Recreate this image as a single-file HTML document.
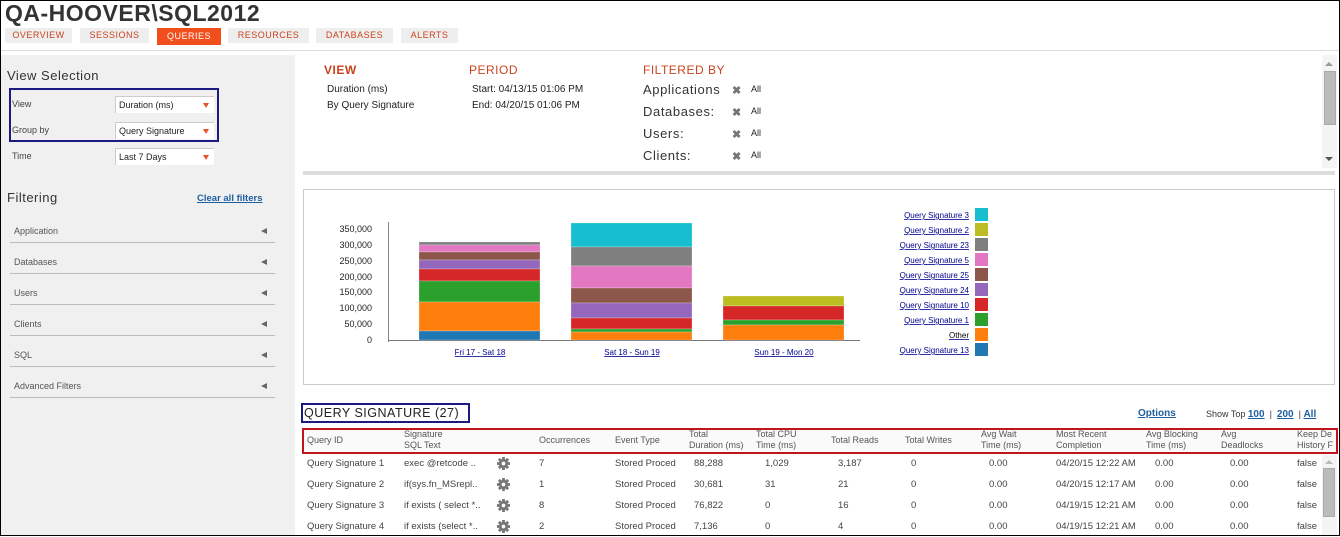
<!DOCTYPE html>
<html><head><meta charset="utf-8">
<style>
*{margin:0;padding:0;box-sizing:border-box}
body{width:1340px;height:536px;overflow:hidden;background:#fff;font-family:"Liberation Sans",sans-serif;position:relative;color:#333}
.a{position:absolute;white-space:nowrap}
.tab{position:absolute;top:28px;height:15px;background:#eee;color:#c9441e;font-size:9px;letter-spacing:.5px;text-align:center;line-height:15px}
.sb{font-size:9px;color:#444}
.sel{position:absolute;left:115px;width:99px;height:17px;background:#fff;border-top:1px solid #ccc;border-left:1px solid #ccc;font-size:9px;line-height:16px;padding-left:3px;color:#222}
.sel:after{content:"";position:absolute;right:5px;top:6px;border-left:3px solid transparent;border-right:3px solid transparent;border-top:5px solid #e8542a}
.flt{position:absolute;left:10px;width:265px;height:22px;border-bottom:1px solid #bbb;font-size:9px;color:#555;padding-left:4px;line-height:20px}
.flt:after{content:"";position:absolute;right:8px;top:7px;border-top:3.5px solid transparent;border-bottom:3.5px solid transparent;border-right:6px solid #666}
.or{color:#c9441e;font-size:12px;letter-spacing:.5px}
.t9{font-size:10px;color:#222}
.fl{font-size:13px;color:#333;letter-spacing:.6px}
.x{font-size:11px;color:#777;font-weight:bold}
.th{font-size:9px;color:#555;line-height:11px}
.td{font-size:9.5px;color:#444}
.gear{position:absolute;left:497px;width:13px;height:13px}
</style></head><body>
<div style="position:absolute;inset:0;border:1px solid #000;z-index:9;pointer-events:none"></div>
<div class="a" style="left:5px;top:0px;font-size:23px;font-weight:bold;color:#333;letter-spacing:.5px">QA-HOOVER\SQL2012</div>
<div class="tab" style="left:5px;width:67px">OVERVIEW</div>
<div class="tab" style="left:80px;width:69px">SESSIONS</div>
<div class="tab" style="left:157px;width:64px;background:#f04e1c;color:#fff;height:17px;top:28px;line-height:17px">QUERIES</div>
<div class="tab" style="left:228px;width:81px">RESOURCES</div>
<div class="tab" style="left:316px;width:77px">DATABASES</div>
<div class="tab" style="left:401px;width:57px">ALERTS</div>
<div class="a" style="left:0;top:50px;width:1340px;height:1px;background:#ddd"></div>

<div class="a" style="left:1px;top:55px;width:294px;height:481px;background:#f0f0f0"></div>
<div class="a" style="left:7px;top:68px;font-size:13px;color:#333;letter-spacing:.5px">View Selection</div>
<div class="a" style="left:9px;top:88px;width:210px;height:54px;border:2px solid #1a1a80"></div>
<div class="a sb" style="left:12px;top:99px">View</div>
<div class="sel" style="top:96px">Duration (ms)</div>
<div class="a sb" style="left:12px;top:125px">Group by</div>
<div class="sel" style="top:122px">Query Signature</div>
<div class="a sb" style="left:12px;top:151px">Time</div>
<div class="sel" style="top:148px">Last 7 Days</div>
<div class="a" style="left:7px;top:190px;font-size:13px;color:#333;letter-spacing:.5px">Filtering</div>
<div class="a" style="left:197px;top:193px;font-size:9.5px;color:#1f5fa0;font-weight:bold;text-decoration:underline">Clear all filters</div>
<div class="flt" style="top:221px">Application</div>
<div class="flt" style="top:252px">Databases</div>
<div class="flt" style="top:283px">Users</div>
<div class="flt" style="top:314px">Clients</div>
<div class="flt" style="top:345px">SQL</div>
<div class="flt" style="top:376px">Advanced Filters</div>

<div class="a or" style="left:324px;top:63px;font-weight:bold">VIEW</div>
<div class="a t9" style="left:327px;top:84px">Duration (ms)</div>
<div class="a t9" style="left:327px;top:100px">By Query Signature</div>
<div class="a or" style="left:469px;top:63px">PERIOD</div>
<div class="a t9" style="left:472px;top:84px">Start: 04/13/15 01:06 PM</div>
<div class="a t9" style="left:472px;top:100px">End: 04/20/15 01:06 PM</div>
<div class="a or" style="left:643px;top:63px">FILTERED BY</div>
<div class="a fl" style="left:643px;top:82px">Applications</div>
<div class="a fl" style="left:643px;top:104px">Databases:</div>
<div class="a fl" style="left:643px;top:126px">Users:</div>
<div class="a fl" style="left:643px;top:148px">Clients:</div>
<div class="a x" style="left:732px;top:84px">✖</div><div class="a t9" style="left:751px;top:84px;font-size:9px">All</div>
<div class="a x" style="left:732px;top:106px">✖</div><div class="a t9" style="left:751px;top:106px;font-size:9px">All</div>
<div class="a x" style="left:732px;top:128px">✖</div><div class="a t9" style="left:751px;top:128px;font-size:9px">All</div>
<div class="a x" style="left:732px;top:150px">✖</div><div class="a t9" style="left:751px;top:150px;font-size:9px">All</div>
<div class="a" style="left:1322px;top:55px;width:15px;height:113px;background:#f4f4f4"></div>
<div class="a" style="left:1324px;top:71px;width:12px;height:54px;background:#bbb;border:1px solid #aaa"></div>
<div class="a" style="left:1325px;top:62px;border-left:4px solid transparent;border-right:4px solid transparent;border-bottom:4px solid #999"></div>
<div class="a" style="left:1325px;top:157px;border-left:4px solid transparent;border-right:4px solid transparent;border-top:4px solid #555"></div>
<div class="a" style="left:303px;top:171px;width:1032px;height:4px;background:#ddd"></div>

<div class="a" style="left:303px;top:189px;width:1032px;height:196px;border:1px solid #ccc"></div>
<svg class="a" style="left:0;top:0" width="1340" height="400">
<g font-family="Liberation Sans" font-size="9" fill="#222" text-anchor="end">
<text x="372" y="232">350,000</text><text x="372" y="248">300,000</text><text x="372" y="264">250,000</text><text x="372" y="280">200,000</text><text x="372" y="295">150,000</text><text x="372" y="311">100,000</text><text x="372" y="327">50,000</text><text x="372" y="343">0</text>
</g>
<line x1="388.5" y1="222" x2="388.5" y2="342" stroke="#888"/>
<line x1="388" y1="340.5" x2="860" y2="340.5" stroke="#777"/>
<g stroke="#fff" stroke-opacity=".4" stroke-width=".6">
<rect x="419" y="242" width="121" height="3" fill="#7f7f7f"/>
<rect x="419" y="245" width="121" height="7" fill="#e377c2"/>
<rect x="419" y="252" width="121" height="8" fill="#8c564b"/>
<rect x="419" y="260" width="121" height="9" fill="#9467bd"/>
<rect x="419" y="269" width="121" height="12" fill="#d62728"/>
<rect x="419" y="281" width="121" height="21" fill="#2ca02c"/>
<rect x="419" y="302" width="121" height="29" fill="#ff7f0e"/>
<rect x="419" y="331" width="121" height="9" fill="#1f77b4"/>
<rect x="571" y="223" width="121" height="24" fill="#17becf"/>
<rect x="571" y="247" width="121" height="19" fill="#7f7f7f"/>
<rect x="571" y="266" width="121" height="22" fill="#e377c2"/>
<rect x="571" y="288" width="121" height="15" fill="#8c564b"/>
<rect x="571" y="303" width="121" height="15" fill="#9467bd"/>
<rect x="571" y="318" width="121" height="11" fill="#d62728"/>
<rect x="571" y="329" width="121" height="3" fill="#2ca02c"/>
<rect x="571" y="332" width="121" height="8" fill="#ff7f0e"/>
<rect x="723" y="296" width="121" height="10" fill="#bcbd22"/>
<rect x="723" y="306" width="121" height="14" fill="#d62728"/>
<rect x="723" y="320" width="121" height="5" fill="#2ca02c"/>
<rect x="723" y="325" width="121" height="15" fill="#ff7f0e"/>
</g>
<g font-family="Liberation Sans" font-size="8" fill="#00008b" text-anchor="middle" text-decoration="underline">
<text x="480" y="355">Fri 17 - Sat 18</text><text x="632" y="355">Sat 18 - Sun 19</text><text x="784" y="355">Sun 19 - Mon 20</text>
</g>
<g font-family="Liberation Sans" font-size="8" fill="#00008b" text-anchor="end" text-decoration="underline">
<text x="969" y="218">Query Signature 3</text><text x="969" y="233">Query Signature 2</text><text x="969" y="248">Query Signature 23</text><text x="969" y="263">Query Signature 5</text><text x="969" y="278">Query Signature 25</text><text x="969" y="293">Query Signature 24</text><text x="969" y="308">Query Signature 10</text><text x="969" y="323">Query Signature 1</text><text x="969" y="338" fill="#000" text-decoration="none">Other</text><text x="969" y="353">Query Signature 13</text>
</g>
<rect x="975" y="208" width="13" height="13" fill="#17becf"/><rect x="975" y="223" width="13" height="13" fill="#bcbd22"/><rect x="975" y="238" width="13" height="13" fill="#7f7f7f"/><rect x="975" y="253" width="13" height="13" fill="#e377c2"/><rect x="975" y="268" width="13" height="13" fill="#8c564b"/><rect x="975" y="283" width="13" height="13" fill="#9467bd"/><rect x="975" y="298" width="13" height="13" fill="#d62728"/><rect x="975" y="313" width="13" height="13" fill="#2ca02c"/><rect x="975" y="328" width="13" height="13" fill="#ff7f0e"/><rect x="975" y="343" width="13" height="13" fill="#1f77b4"/>
</svg>

<div class="a" style="left:301px;top:403px;width:169px;height:20px;border:2px solid #1a1a80"></div>
<div class="a" style="left:304px;top:406px;font-size:12.5px;color:#222;letter-spacing:.5px">QUERY SIGNATURE (27)</div>
<div class="a" style="left:1138px;top:408px;font-size:10px;color:#1f5fa0;font-weight:bold;text-decoration:underline">Options</div>
<div class="a" style="left:1206px;top:409px;font-size:9px;color:#333">Show Top <b style="color:#1f5fa0;text-decoration:underline;font-size:10px">100</b> &nbsp;|&nbsp; <b style="color:#1f5fa0;text-decoration:underline;font-size:10px">200</b> &nbsp;| <b style="color:#1f5fa0;text-decoration:underline;font-size:10px">All</b></div>
<div class="a" style="left:302px;top:428px;width:1036px;height:26px;border:2px solid #c0141e;background:#fafafa"></div>
<div class="a th" style="left:307px;top:435px">Query ID</div>
<div class="a th" style="left:404px;top:429px">Signature<br>SQL Text</div>
<div class="a th" style="left:539px;top:435px">Occurrences</div>
<div class="a th" style="left:615px;top:435px">Event Type</div>
<div class="a th" style="left:689px;top:429px">Total<br>Duration (ms)</div>
<div class="a th" style="left:756px;top:429px">Total CPU<br>Time (ms)</div>
<div class="a th" style="left:831px;top:435px">Total Reads</div>
<div class="a th" style="left:905px;top:435px">Total Writes</div>
<div class="a th" style="left:981px;top:429px">Avg Wait<br>Time (ms)</div>
<div class="a th" style="left:1056px;top:429px">Most Recent<br>Completion</div>
<div class="a th" style="left:1146px;top:429px">Avg Blocking<br>Time (ms)</div>
<div class="a th" style="left:1221px;top:429px">Avg<br>Deadlocks</div>
<div class="a th" style="left:1297px;top:429px;width:39px;overflow:hidden">Keep De<br>History F</div>
<div class="a" style="left:1322px;top:455px;width:15px;height:81px;background:#f4f4f4"></div>
<div class="a" style="left:1323px;top:468px;width:12px;height:49px;background:#bbb;border:1px solid #aaa"></div>
<div class="a" style="left:1325px;top:460px;border-left:4px solid transparent;border-right:4px solid transparent;border-bottom:4px solid #bbb"></div>

<div class="a td" style="left:307px;top:453px;line-height:21px">Query Signature 1<br>Query Signature 2<br>Query Signature 3<br>Query Signature 4</div>
<div class="a td" style="left:404px;top:453px;line-height:21px">exec @retcode ..<br>if(sys.fn_MSrepl..<br>if exists ( select *..<br>if exists (select *..</div>
<svg class="gear" style="top:457px" viewBox="0 0 14 14"><g fill="#777"><circle cx="7" cy="7" r="5"/><rect x="5.5" y="0" width="3" height="14"/><rect x="0" y="5.5" width="14" height="3"/><rect x="5.5" y="0" width="3" height="14" transform="rotate(45 7 7)"/><rect x="5.5" y="0" width="3" height="14" transform="rotate(-45 7 7)"/></g><circle cx="7" cy="7" r="2" fill="#fff"/></svg>
<svg class="gear" style="top:478px" viewBox="0 0 14 14"><g fill="#777"><circle cx="7" cy="7" r="5"/><rect x="5.5" y="0" width="3" height="14"/><rect x="0" y="5.5" width="14" height="3"/><rect x="5.5" y="0" width="3" height="14" transform="rotate(45 7 7)"/><rect x="5.5" y="0" width="3" height="14" transform="rotate(-45 7 7)"/></g><circle cx="7" cy="7" r="2" fill="#fff"/></svg>
<svg class="gear" style="top:499px" viewBox="0 0 14 14"><g fill="#777"><circle cx="7" cy="7" r="5"/><rect x="5.5" y="0" width="3" height="14"/><rect x="0" y="5.5" width="14" height="3"/><rect x="5.5" y="0" width="3" height="14" transform="rotate(45 7 7)"/><rect x="5.5" y="0" width="3" height="14" transform="rotate(-45 7 7)"/></g><circle cx="7" cy="7" r="2" fill="#fff"/></svg>
<svg class="gear" style="top:520px" viewBox="0 0 14 14"><g fill="#777"><circle cx="7" cy="7" r="5"/><rect x="5.5" y="0" width="3" height="14"/><rect x="0" y="5.5" width="14" height="3"/><rect x="5.5" y="0" width="3" height="14" transform="rotate(45 7 7)"/><rect x="5.5" y="0" width="3" height="14" transform="rotate(-45 7 7)"/></g><circle cx="7" cy="7" r="2" fill="#fff"/></svg>
<div class="a td" style="left:539px;top:453px;line-height:21px">7<br>1<br>8<br>2</div>
<div class="a td" style="left:615px;top:453px;line-height:21px">Stored Proced<br>Stored Proced<br>Stored Proced<br>Stored Proced</div>
<div class="a td" style="left:694px;top:453px;line-height:21px">88,288<br>30,681<br>76,822<br>7,136</div>
<div class="a td" style="left:765px;top:453px;line-height:21px">1,029<br>31<br>0<br>0</div>
<div class="a td" style="left:838px;top:453px;line-height:21px">3,187<br>21<br>16<br>4</div>
<div class="a td" style="left:911px;top:453px;line-height:21px">0<br>0<br>0<br>0</div>
<div class="a td" style="left:989px;top:453px;line-height:21px">0.00<br>0.00<br>0.00<br>0.00</div>
<div class="a td" style="left:1056px;top:453px;line-height:21px">04/20/15 12:22 AM<br>04/20/15 12:17 AM<br>04/19/15 12:21 AM<br>04/19/15 12:21 AM</div>
<div class="a td" style="left:1155px;top:453px;line-height:21px">0.00<br>0.00<br>0.00<br>0.00</div>
<div class="a td" style="left:1230px;top:453px;line-height:21px">0.00<br>0.00<br>0.00<br>0.00</div>
<div class="a td" style="left:1297px;top:453px;line-height:21px">false<br>false<br>false<br>false</div>
</body></html>
